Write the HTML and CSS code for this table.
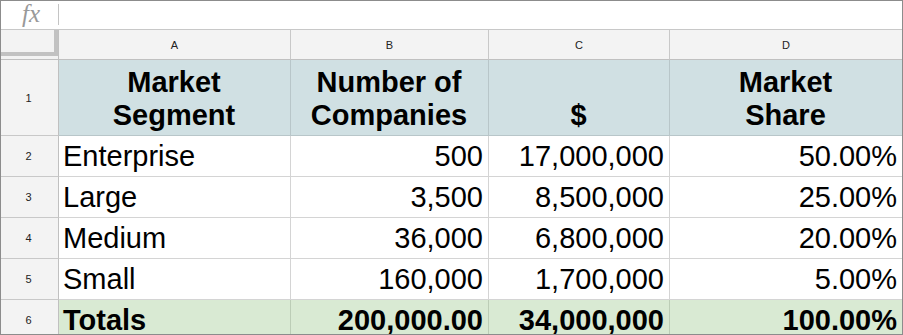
FILE: index.html
```html
<!DOCTYPE html>
<html>
<head>
<meta charset="utf-8">
<link rel="stylesheet" href="styles.css">
</head>
<body>
<div class="frame">
  <div class="fbar">
    <div class="fx">fx</div>
    <div class="fsep"></div>
    <div class="finput"></div>
  </div>
  <div class="grid">
    <div class="corner"><div class="freeze"></div></div>
    <div class="colhdr">A</div>
    <div class="colhdr">B</div>
    <div class="colhdr">C</div>
    <div class="colhdr last">D</div>

    <div class="rowhdr">1</div>
    <div class="cell head center">Market<br>Segment</div>
    <div class="cell head center">Number of<br>Companies</div>
    <div class="cell head center">$</div>
    <div class="cell head center last">Market<br>Share</div>

    <div class="rowhdr">2</div>
    <div class="cell">Enterprise</div>
    <div class="cell right">500</div>
    <div class="cell right">17,000,000</div>
    <div class="cell right last">50.00%</div>

    <div class="rowhdr">3</div>
    <div class="cell">Large</div>
    <div class="cell right">3,500</div>
    <div class="cell right">8,500,000</div>
    <div class="cell right last">25.00%</div>

    <div class="rowhdr">4</div>
    <div class="cell">Medium</div>
    <div class="cell right">36,000</div>
    <div class="cell right">6,800,000</div>
    <div class="cell right last">20.00%</div>

    <div class="rowhdr">5</div>
    <div class="cell">Small</div>
    <div class="cell right">160,000</div>
    <div class="cell right">1,700,000</div>
    <div class="cell right last">5.00%</div>

    <div class="rowhdr">6</div>
    <div class="cell total">Totals</div>
    <div class="cell total right">200,000.00</div>
    <div class="cell total right">34,000,000</div>
    <div class="cell total right last">100.00%</div>
  </div>
</div>
</body>
</html>
```
FILE: styles.css
```css
* { box-sizing: border-box; }
html, body { margin: 0; padding: 0; background: #fff; }
body { font-family: "Liberation Sans", Arial, sans-serif; }

.frame {
  width: 903px;
  height: 335px;
  border: 1px solid #8c8c8c;
  overflow: hidden;
  background: #fff;
}

.fbar {
  display: flex;
  align-items: center;
  height: 29px;
  border-bottom: 1px solid #c8c8c8;
}
.fx {
  width: 57px;
  padding-left: 21px;
  font-family: "Liberation Serif", "Times New Roman", serif;
  font-style: italic;
  font-size: 25px;
  color: #999;
  line-height: 25px;
  margin-top: -3px;
}
.fsep {
  width: 1px;
  height: 21px;
  background: #c4c4c4;
  margin-top: -2px;
}
.finput { flex: 1; }

.grid {
  display: grid;
  grid-template-columns: 58px 232px 198px 181px 232px;
  grid-template-rows: 30px 76px 41px 41px 41px 41px 41px;
}

.corner {
  background: #f3f3f3;
  border-right: 1px solid #c0c0c0;
  border-bottom: 1px solid #c0c0c0;
}
.freeze {
  width: 57px;
  height: 26px;
  border-right: 4px solid #c2c2c2;
  border-bottom: 4px solid #c2c2c2;
}

.colhdr {
  background: #f3f3f3;
  border-right: 1px solid #c8c8c8;
  border-bottom: 1px solid #c0c0c0;
  font-size: 11px;
  color: #222;
  display: flex;
  align-items: center;
  justify-content: center;
  padding-top: 1px;
}
.colhdr.last { border-right: none; }

.rowhdr {
  background: #f3f3f3;
  border-right: 1px solid #c0c0c0;
  border-bottom: 1px solid #c8c8c8;
  font-size: 11px;
  color: #222;
  display: flex;
  align-items: center;
  justify-content: center;
  padding-right: 2px;
}

.cell {
  border-right: 1px solid #d4d4d4;
  border-bottom: 1px solid #d4d4d4;
  font-size: 29px;
  line-height: 33px;
  color: #000;
  display: flex;
  align-items: flex-end;
  justify-content: flex-start;
  padding: 0 5px 3px 4px;
  white-space: nowrap;
}
.cell.last { border-right: none; }
.cell.right { justify-content: flex-end; text-align: right; }
.cell.center { justify-content: center; text-align: center; }

.head {
  background: #d0e0e3;
  font-weight: bold;
  border-right-color: #b8c6c9;
  border-bottom-color: #b8c6c9;
}
.total {
  background: #d9ead3;
  font-weight: bold;
  border-right-color: #bccdb6;
}
```
